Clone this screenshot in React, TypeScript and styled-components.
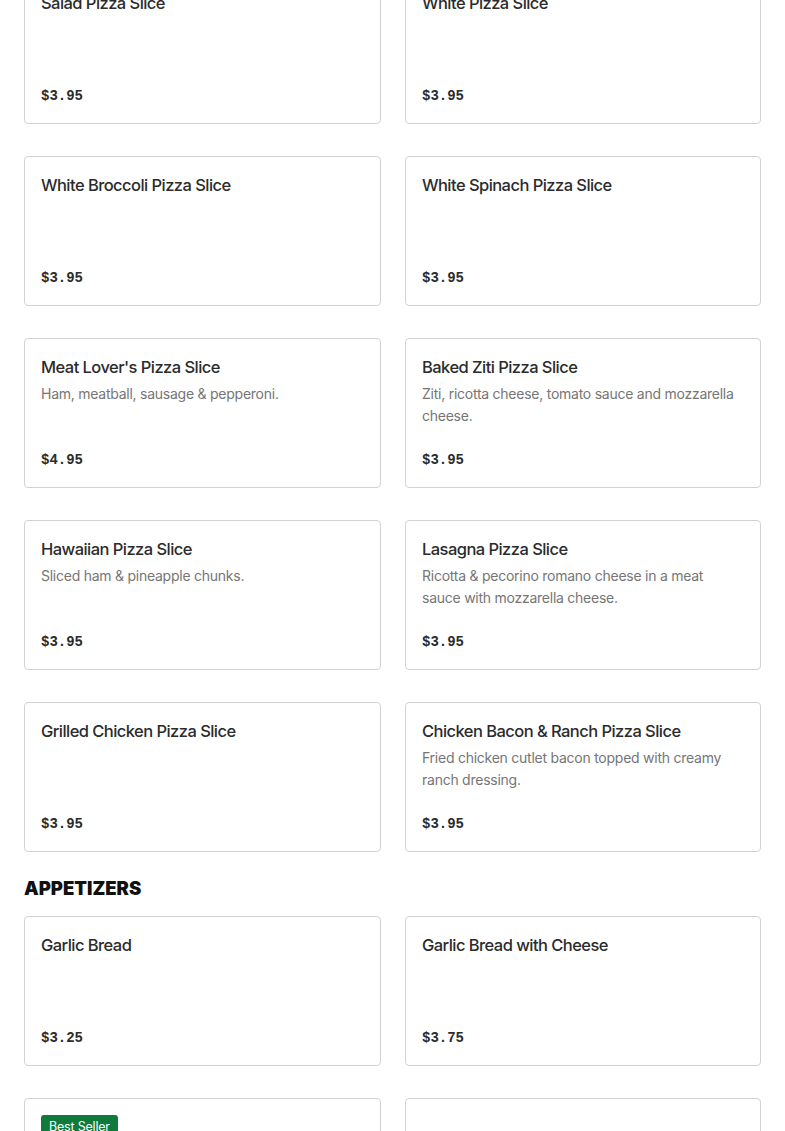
import React from 'react';
import styled, { createGlobalStyle } from 'styled-components';

type Item = {
  name: string;
  description?: string;
  price: string;
  badge?: string;
};

const pizzaSlices: Item[] = [
  { name: 'Salad Pizza Slice', price: '$3.95' },
  { name: 'White Pizza Slice', price: '$3.95' },
  { name: 'White Broccoli Pizza Slice', price: '$3.95' },
  { name: 'White Spinach Pizza Slice', price: '$3.95' },
  {
    name: "Meat Lover's Pizza Slice",
    description: 'Ham, meatball, sausage & pepperoni.',
    price: '$4.95',
  },
  {
    name: 'Baked Ziti Pizza Slice',
    description: 'Ziti, ricotta cheese, tomato sauce and mozzarella cheese.',
    price: '$3.95',
  },
  {
    name: 'Hawaiian Pizza Slice',
    description: 'Sliced ham & pineapple chunks.',
    price: '$3.95',
  },
  {
    name: 'Lasagna Pizza Slice',
    description:
      'Ricotta & pecorino romano cheese in a meat sauce with mozzarella cheese.',
    price: '$3.95',
  },
  { name: 'Grilled Chicken Pizza Slice', price: '$3.95' },
  {
    name: 'Chicken Bacon & Ranch Pizza Slice',
    description: 'Fried chicken cutlet bacon topped with creamy ranch dressing.',
    price: '$3.95',
  },
];

const appetizers: Item[] = [
  { name: 'Garlic Bread', price: '$3.25' },
  { name: 'Garlic Bread with Cheese', price: '$3.75' },
  { name: 'Garlic Knots', price: '$3.95', badge: 'Best Seller' },
  { name: 'Mozzarella Sticks', price: '$7.95' },
];

// cards in the same row keep the badge slot so titles line up
const MenuCard: React.FC<{ item: Item; rowHasBadge?: boolean }> = ({
  item,
  rowHasBadge,
}) => (
  <SCard>
    {item.badge ? (
      <SBadge>{item.badge}</SBadge>
    ) : (
      rowHasBadge && <SBadge $ghost>&nbsp;</SBadge>
    )}
    <STitle>{item.name}</STitle>
    {item.description && <SDesc>{item.description}</SDesc>}
    <SPrice>{item.price}</SPrice>
  </SCard>
);

const renderGrid = (items: Item[]) =>
  items.map((item, i) => {
    const rowStart = i - (i % 2);
    const rowHasBadge = items.slice(rowStart, rowStart + 2).some((x) => x.badge);
    return <MenuCard key={item.name} item={item} rowHasBadge={rowHasBadge} />;
  });

export default function App() {
  return (
    <>
      <GlobalStyle />
      <SPage>
        <SGrid>{renderGrid(pizzaSlices)}</SGrid>
        <SSectionTitle>APPETIZERS</SSectionTitle>
        <SGrid>{renderGrid(appetizers)}</SGrid>
      </SPage>
    </>
  );
}

const GlobalStyle = createGlobalStyle`
  html, body {
    margin: 0;
    padding: 0;
    background: #fff;
    overflow: hidden;
  }
  body {
    font-family: Inter, "Liberation Sans", sans-serif;
    color: #2b2b2b;
  }
`;

const SPage = styled.main`
  margin-top: -26px;
  padding: 0 24px;
`;

const SGrid = styled.div`
  display: grid;
  grid-template-columns: 357px 356px;
  column-gap: 24px;
  row-gap: 32px;
`;

const SCard = styled.div`
  box-sizing: border-box;
  height: 150px;
  border: 1px solid #d2d2d2;
  border-radius: 4px;
  padding: 16px 16px 15px;
  display: flex;
  flex-direction: column;
  align-items: flex-start;
`;

const SBadge = styled.span<{ $ghost?: boolean }>`
  background: ${(p) => (p.$ghost ? 'transparent' : '#0e7a3c')};
  color: #fff;
  font-size: 12.5px;
  letter-spacing: -0.2px;
  line-height: 22px;
  padding: 1px 8px 0;
  border-radius: 3px;
  margin-bottom: 12px;
`;

const STitle = styled.h3`
  margin: 0;
  font-size: 16.5px;
  font-weight: 500;
  letter-spacing: -0.55px;
  line-height: 24px;
  color: #2b2b2b;
`;

const SDesc = styled.p`
  margin: 4px 0 0;
  font-size: 14px;
  letter-spacing: -0.25px;
  line-height: 22px;
  color: #767676;
`;

const SPrice = styled.div`
  margin-top: auto;
  font-family: "Liberation Mono", "DejaVu Sans Mono", monospace;
  font-weight: 700;
  font-size: 14px;
  line-height: 24px;
  color: #2b2b2b;
`;

const SSectionTitle = styled.h2`
  margin: 24px 0 16px;
  font-size: 18.5px;
  font-weight: 900;
  line-height: 24px;
  color: #111;
`;
